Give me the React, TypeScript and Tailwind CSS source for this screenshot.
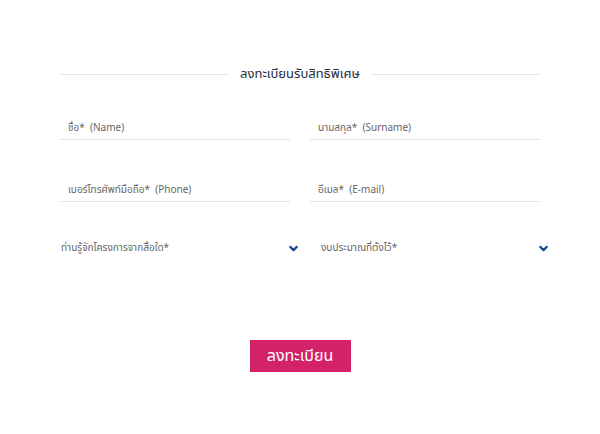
import { ChevronDown } from 'lucide-react'

const fieldText = "font-['Noto_Sans_Thai','Noto_Sans','Liberation_Sans',sans-serif]"

function Field({ label }: { label: string }) {
  return (
    <div className="border-b border-[#e3e3e3] pb-[4px] pl-[8px] pt-[1px] text-[10px] leading-[14px] text-[#666] whitespace-pre">
      {label}
    </div>
  )
}

function Select({ label }: { label: string }) {
  return (
    <div className="flex h-[14px] items-center justify-between pl-[1px] text-[10px] leading-[14px] text-[#666]">
      <span>{label}</span>
      <ChevronDown className="w-[13px] h-[13px] text-[#1d4a8e] -mr-[10px]" strokeWidth={4} />
    </div>
  )
}

export default function App() {
  return (
    <div className={`min-h-[434px] w-[600px] bg-white ${fieldText}`}>
      <div className="mx-auto w-[480px] pt-[64px]">
        {/* หัวข้อ */}
        <div className="flex h-[20px] items-center gap-[11px]">
          <div className="h-px flex-1 bg-[#e6e6e6]" />
          <h2 className="text-[13px] leading-[20px] text-[#262b3c]">ลงทะเบียนรับสิทธิพิเศษ</h2>
          <div className="h-px flex-1 bg-[#e6e6e6]" />
        </div>

        {/* ฟอร์ม */}
        <div className="mt-[36px] grid grid-cols-2 gap-x-[20px]">
          <Field label="ชื่อ*  (Name)" />
          <Field label="นามสกุล*  (Surname)" />
        </div>
        <div className="mt-[42px] grid grid-cols-2 gap-x-[20px]">
          <Field label="เบอร์โทรศัพท์มือถือ*  (Phone)" />
          <Field label="อีเมล*  (E-mail)" />
        </div>
        <div className="mt-[39px] grid grid-cols-2 gap-x-[20px]">
          <Select label="ท่านรู้จักโครงการจากสื่อใด*" />
          <div className="pl-[10px]">
            <Select label="งบประมาณที่ตั้งไว้*" />
          </div>
        </div>

        {/* ปุ่ม */}
        <div className="mt-[85px] flex justify-center">
          <button className="h-[32px] w-[101px] bg-[#d4226a] text-[16px] leading-[32px] text-white">
            ลงทะเบียน
          </button>
        </div>
      </div>
    </div>
  )
}
